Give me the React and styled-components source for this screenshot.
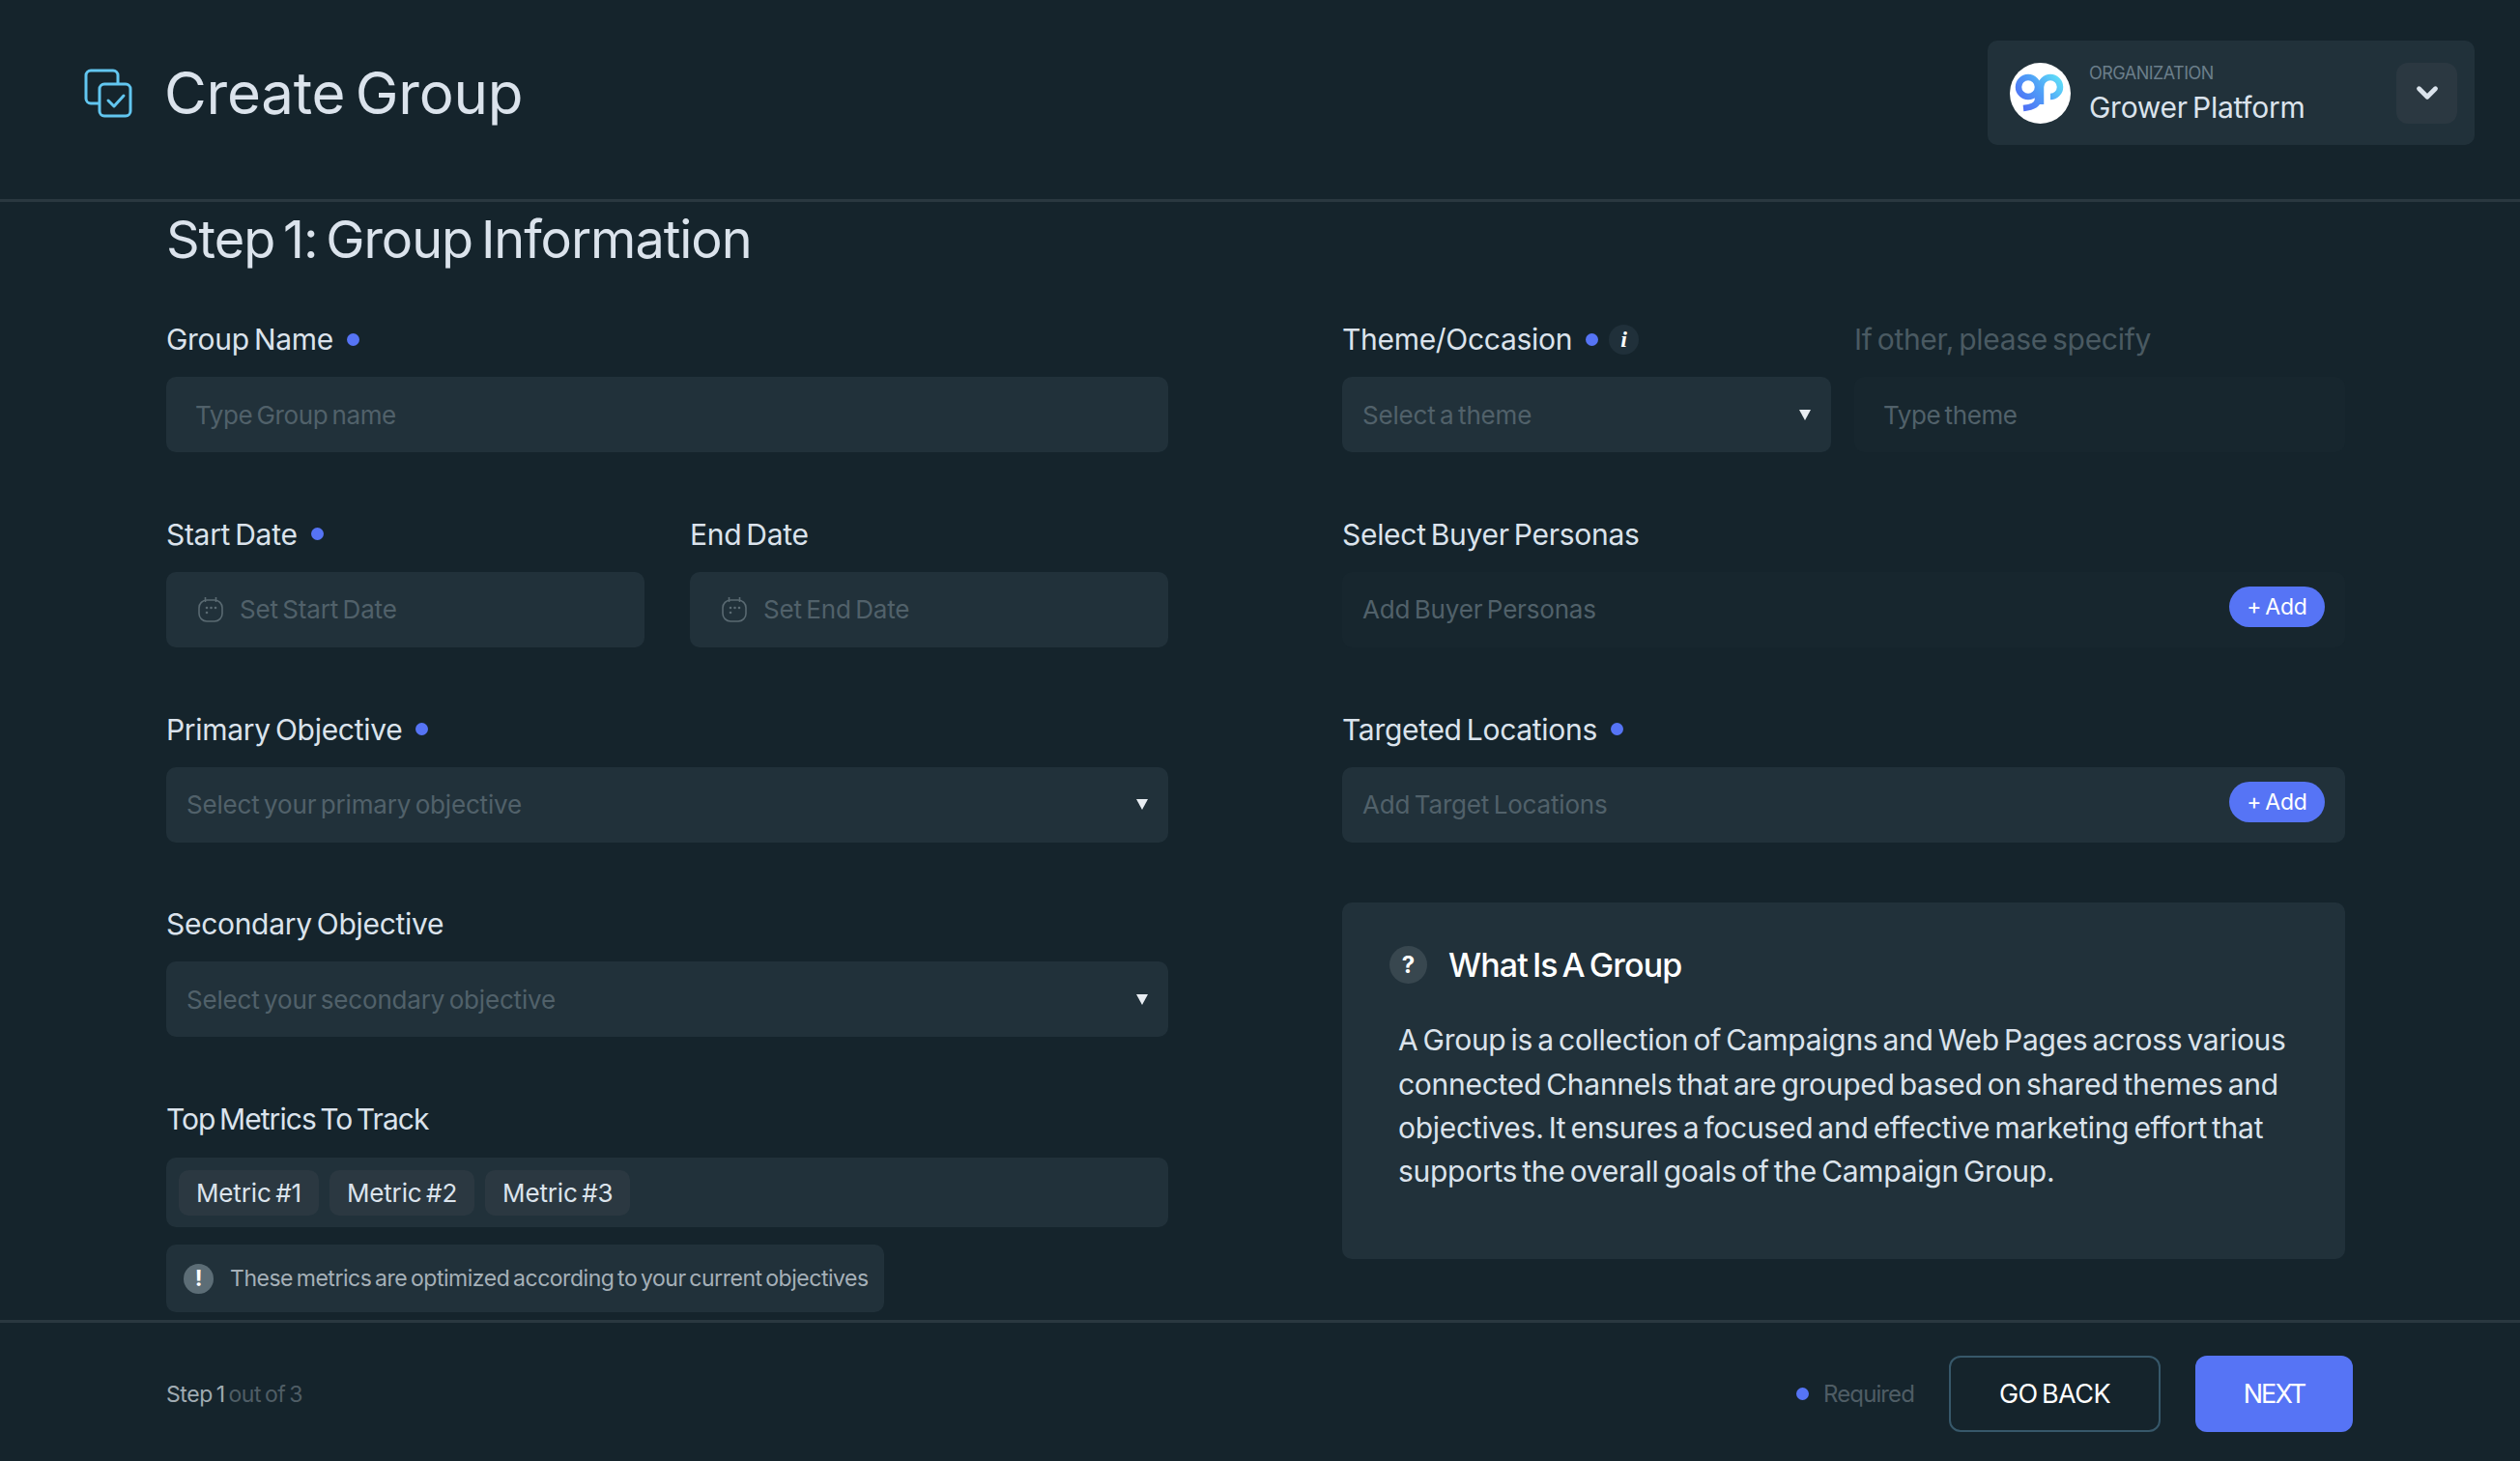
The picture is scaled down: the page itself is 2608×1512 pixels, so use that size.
import React from "react";
import styled, { createGlobalStyle } from "styled-components";
import { ChevronDown } from "lucide-react";

const GlobalStyle = createGlobalStyle`
  html, body {
    margin: 0;
    height: 100%;
    background: #15242c;
    font-family: "Inter", "Liberation Sans", sans-serif;
    overflow: hidden;
  }
  * {
    box-sizing: border-box;
    word-spacing: -0.1em;
  }
`;

const Page = styled.div`
  height: 100vh;
  display: flex;
  flex-direction: column;
  background: #15242c;
  color: #dbe3ec;
`;

const Header = styled.header`
  height: 209px;
  flex-shrink: 0;
  border-bottom: 3px solid #2a3840;
  display: flex;
  align-items: center;
  justify-content: space-between;
  padding: 0 47px 14px 87px;
`;

const TitleWrap = styled.div`
  display: flex;
  align-items: center;
  gap: 33px;
`;

const PageTitle = styled.h1`
  margin: 0;
  font-size: 60px;
  font-weight: 400;
  letter-spacing: -0.25px;
  color: #dbe3ec;
`;

const OrgBox = styled.div`
  width: 504px;
  height: 108px;
  background: #21313a;
  border-radius: 10px;
  display: flex;
  align-items: center;
  padding: 0 18px 0 23px;
`;

const OrgText = styled.div`
  flex: 1;
  margin: 2px 0 0 19px;
  display: flex;
  flex-direction: column;
  gap: 6px;
`;

const OrgLabel = styled.span`
  font-size: 18px;
  line-height: 22px;
  letter-spacing: -0.03em;
  color: #6b7e8a;
`;

const OrgName = styled.span`
  font-size: 30px;
  line-height: 36px;
  letter-spacing: -0.26px;
  color: #dbe3ec;
`;

const OrgToggle = styled.button`
  width: 63px;
  height: 63px;
  border: none;
  border-radius: 12px;
  background: #2b3841;
  color: #dbe3ec;
  display: flex;
  align-items: center;
  justify-content: center;
  padding: 0;
`;

const Content = styled.main`
  flex: 1;
  min-height: 0;
  overflow: hidden;
  padding: 0 181px 0 172px;
`;

const StepTitle = styled.h2`
  margin: 0 0 44px;
  height: 78px;
  line-height: 78px;
  font-size: 54px;
  font-weight: 400;
  letter-spacing: -1.03px;
  color: #dbe3ec;
`;

const Columns = styled.div`
  display: grid;
  grid-template-columns: 1037px 1038px;
  column-gap: 180px;
`;

const Column = styled.div`
  display: flex;
  flex-direction: column;
  gap: 64.75px;
`;

const Field = styled.div`
  display: flex;
  flex-direction: column;
  gap: 19px;
  min-width: 0;
`;

const Pair = styled.div`
  display: grid;
  grid-template-columns: ${(p) => p.$cols};
  column-gap: ${(p) => p.$gap}px;
`;

const LabelRow = styled.div`
  height: 40px;
  display: flex;
  align-items: center;
  gap: 14px;
`;

const Label = styled.label`
  font-size: 30px;
  letter-spacing: ${(p) => (p.$tight ? "-0.95px" : "-0.3px")};
  color: ${(p) => (p.$muted ? "#4a5a62" : "#dbe3ec")};
`;

const Dot = styled.span`
  width: 13px;
  height: 13px;
  border-radius: 50%;
  background: #5674f5;
  flex-shrink: 0;
`;

const InfoBadge = styled.span`
  width: 31px;
  height: 31px;
  margin-left: -3px;
  border-radius: 50%;
  background: #20303a;
  color: #fff;
  font-family: "Liberation Serif", serif;
  font-style: italic;
  font-weight: 700;
  font-size: 24px;
  display: flex;
  align-items: center;
  justify-content: center;
`;

const Box = styled.div`
  height: 78px;
  border-radius: 10px;
  background: ${(p) => (p.$subtle ? "#17262e" : "#21313a")};
  display: flex;
  align-items: center;
  padding: 0 21px;
`;

const InputBox = styled.input`
  height: 78px;
  width: 100%;
  border: none;
  outline: none;
  border-radius: 10px;
  background: ${(p) => (p.$subtle ? "#17262e" : "#21313a")};
  padding: 0 30px;
  font: inherit;
  font-size: 26px;
  letter-spacing: -0.4px;
  color: #dbe3ec;
  &::placeholder { color: #51616a; opacity: 1; }
`;

const Placeholder = styled.span`
  flex: 1;
  font-size: 26px;
  letter-spacing: -0.18px;
  color: #51616a;
`;

const Caret = styled.span`
  width: 0;
  height: 0;
  border-left: 6px solid transparent;
  border-right: 6px solid transparent;
  border-top: 11px solid #e8edf2;
`;

const DateBox = styled(Box)`
  padding-left: 33px;
  gap: 17px;
`;

const AddBox = styled(Box)`
  justify-content: space-between;
`;

const AddButton = styled.button`
  width: 99px;
  height: 42px;
  margin-top: -6px;
  border: none;
  border-radius: 21px;
  background: #5674f5;
  color: #fff;
  font: inherit;
  font-size: 23px;
  letter-spacing: -0.23px;
  padding: 0;
`;

const MetricsBox = styled.div`
  height: 72px;
  margin-top: 2px;
  border-radius: 10px;
  background: #21313a;
  display: flex;
  align-items: center;
  gap: 11px;
  padding: 0 13px;
`;

const Chip = styled.span`
  height: 47px;
  padding: 0 18px;
  border-radius: 10px;
  background: #2b3841;
  display: flex;
  align-items: center;
  font-size: 26px;
  letter-spacing: -0.15px;
  color: #dbe3ec;
`;

const Notice = styled.div`
  width: 743px;
  height: 70px;
  border-radius: 10px;
  background: #21313a;
  display: flex;
  align-items: center;
  gap: 17px;
  padding: 0 18px;
  font-size: 23px;
  letter-spacing: -0.47px;
  white-space: nowrap;
  color: #a5b0b8;
`;

const WarnIcon = styled.span`
  width: 31px;
  height: 31px;
  flex-shrink: 0;
  border-radius: 50%;
  background: #5c6d76;
  color: #fff;
  font-weight: 700;
  font-size: 23px;
  display: flex;
  align-items: center;
  justify-content: center;
`;

const MetricsField = styled(Field)`
  gap: 18px;
`;

const InfoCard = styled.section`
  height: 369px;
  margin-top: -2px;
  border-radius: 10px;
  background: #21313a;
  padding: 45px 58px 0 58px;
`;

const CardHead = styled.div`
  display: flex;
  align-items: center;
  gap: 22px;
  margin-left: -9px;
  height: 39px;
`;

const HelpIcon = styled.span`
  width: 39px;
  height: 39px;
  border-radius: 50%;
  background: #38474f;
  color: #fff;
  font-weight: 700;
  font-size: 24px;
  display: flex;
  align-items: center;
  justify-content: center;
`;

const CardTitle = styled.h3`
  margin: 0;
  font-size: 34px;
  font-weight: 500;
  letter-spacing: -0.84px;
  color: #fff;
`;

const CardBody = styled.p`
  margin: 36px 0 0;
  font-size: 30px;
  line-height: 45.3px;
  letter-spacing: -0.28px;
  color: #dbe3ec;
`;

const Footer = styled.footer`
  height: 146px;
  flex-shrink: 0;
  border-top: 3px solid #2a3840;
  display: flex;
  align-items: center;
  justify-content: space-between;
  padding: 4px 173px 0 172px;
`;

const StepCount = styled.div`
  font-size: 23px;
  letter-spacing: -0.4px;
  color: #a0abb2;
  span { color: #4f5d65; }
`;

const FooterActions = styled.div`
  display: flex;
  align-items: center;
`;

const Required = styled.div`
  display: flex;
  align-items: center;
  gap: 15px;
  margin-right: 36px;
  font-size: 24px;
  letter-spacing: -0.9px;
  color: #4f5d65;
`;

const BackButton = styled.button`
  width: 219px;
  height: 79px;
  margin-right: 36px;
  border: 2px solid #37586a;
  border-radius: 12px;
  background: transparent;
  color: #fff;
  font: inherit;
  font-size: 27px;
  letter-spacing: -0.54px;
`;

const NextButton = styled.button`
  width: 163px;
  height: 79px;
  border: none;
  border-radius: 12px;
  background: #5674f5;
  color: #fff;
  font: inherit;
  font-size: 27px;
  letter-spacing: -1.9px;
`;

const GroupIcon = () => (
  <svg width="50" height="51" viewBox="0 0 50 51" fill="none" stroke="#62c6f0" strokeWidth="3">
    <path d="M35 16V7a5 5 0 0 0-5-5H7a5 5 0 0 0-5 5v24a5 5 0 0 0 5 5h9" strokeLinecap="round" />
    <rect x="16" y="16" width="32" height="33" rx="5" fill="#15242c" />
    <path d="M25 33l6 6 10-11" strokeLinecap="round" strokeLinejoin="round" />
  </svg>
);

const GpLogo = () => (
  <svg width="63" height="63" viewBox="0 0 63 63">
    <defs>
      <linearGradient id="gpGrad" gradientUnits="userSpaceOnUse" x1="8" y1="48" x2="54" y2="12">
        <stop offset="0" stopColor="#4f66f5" />
        <stop offset="0.5" stopColor="#4f9df7" />
        <stop offset="1" stopColor="#62e8f8" />
      </linearGradient>
    </defs>
    <circle cx="31.5" cy="31.5" r="31.5" fill="#fff" />
    <path
      d="M29 25a10 10 0 1 0-20 0a10 10 0 1 0 20 0V38c0 5-6 8-15 9M32 43V25a10 10 0 1 1 10 10"
      fill="none"
      stroke="url(#gpGrad)"
      strokeWidth="6.5"
    />
  </svg>
);

const CalendarIcon = () => (
  <svg width="26" height="27" viewBox="0 0 26 27" fill="none" stroke="#5a6a72" strokeWidth="1.6">
    <rect x="1" y="4" width="24" height="22" rx="8" />
    <path d="M7.5 1v5M18.5 1v5" />
    <g fill="#5a6a72" stroke="none">
      <circle cx="9" cy="12" r="1.3" />
      <circle cx="13.5" cy="12" r="1.3" />
      <circle cx="18" cy="12" r="1.3" />
      <circle cx="9" cy="17" r="1.3" />
    </g>
  </svg>
);

const FieldLabel = ({ text, required, tight, children }) => (
  <LabelRow>
    <Label $tight={tight}>{text}</Label>
    {required && <Dot />}
    {children}
  </LabelRow>
);

const SelectBox = ({ placeholder }) => (
  <Box>
    <Placeholder>{placeholder}</Placeholder>
    <Caret />
  </Box>
);

const App = () => {
  return (
    <Page>
      <GlobalStyle />
      <Header>
        <TitleWrap>
          <GroupIcon />
          <PageTitle>Create Group</PageTitle>
        </TitleWrap>
        <OrgBox>
          <GpLogo />
          <OrgText>
            <OrgLabel>ORGANIZATION</OrgLabel>
            <OrgName>Grower Platform</OrgName>
          </OrgText>
          <OrgToggle>
            <ChevronDown size={34} strokeWidth={3.4} />
          </OrgToggle>
        </OrgBox>
      </Header>

      <Content>
        <StepTitle>Step 1: Group Information</StepTitle>
        <Columns>
          <Column>
            <Field>
              <FieldLabel text="Group Name" required />
              <InputBox placeholder="Type Group name" />
            </Field>
            <Pair $cols="495px 495px" $gap={47}>
              <Field>
                <FieldLabel text="Start Date" required />
                <DateBox>
                  <CalendarIcon />
                  <Placeholder>Set Start Date</Placeholder>
                </DateBox>
              </Field>
              <Field>
                <FieldLabel text="End Date" />
                <DateBox>
                  <CalendarIcon />
                  <Placeholder>Set End Date</Placeholder>
                </DateBox>
              </Field>
            </Pair>
            <Field>
              <FieldLabel text="Primary Objective" required />
              <SelectBox placeholder="Select your primary objective" />
            </Field>
            <Field>
              <FieldLabel text="Secondary Objective" />
              <SelectBox placeholder="Select your secondary objective" />
            </Field>
            <MetricsField>
              <FieldLabel text="Top Metrics To Track" tight />
              <MetricsBox>
                <Chip>Metric #1</Chip>
                <Chip>Metric #2</Chip>
                <Chip>Metric #3</Chip>
              </MetricsBox>
              <Notice>
                <WarnIcon>!</WarnIcon>
                These metrics are optimized according to your current objectives
              </Notice>
            </MetricsField>
          </Column>

          <Column>
            <Pair $cols="506px 508px" $gap={24}>
              <Field>
                <FieldLabel text="Theme/Occasion" required>
                  <InfoBadge>i</InfoBadge>
                </FieldLabel>
                <SelectBox placeholder="Select a theme" />
              </Field>
              <Field>
                <LabelRow>
                  <Label $muted>If other, please specify</Label>
                </LabelRow>
                <InputBox $subtle placeholder="Type theme" />
              </Field>
            </Pair>
            <Field>
              <FieldLabel text="Select Buyer Personas" />
              <AddBox $subtle>
                <Placeholder>Add Buyer Personas</Placeholder>
                <AddButton>+ Add</AddButton>
              </AddBox>
            </Field>
            <Field>
              <FieldLabel text="Targeted Locations" required />
              <AddBox>
                <Placeholder>Add Target Locations</Placeholder>
                <AddButton>+ Add</AddButton>
              </AddBox>
            </Field>
            <InfoCard>
              <CardHead>
                <HelpIcon>?</HelpIcon>
                <CardTitle>What Is A Group</CardTitle>
              </CardHead>
              <CardBody>
                A Group is a collection of Campaigns and Web Pages across various connected Channels
                that are grouped based on shared themes and objectives. It ensures a focused and
                effective marketing effort that supports the overall goals of the Campaign Group.
              </CardBody>
            </InfoCard>
          </Column>
        </Columns>
      </Content>

      <Footer>
        <StepCount>
          Step 1 <span>out of 3</span>
        </StepCount>
        <FooterActions>
          <Required>
            <Dot />
            Required
          </Required>
          <BackButton>GO BACK</BackButton>
          <NextButton>NEXT</NextButton>
        </FooterActions>
      </Footer>
    </Page>
  );
};

export default App;
